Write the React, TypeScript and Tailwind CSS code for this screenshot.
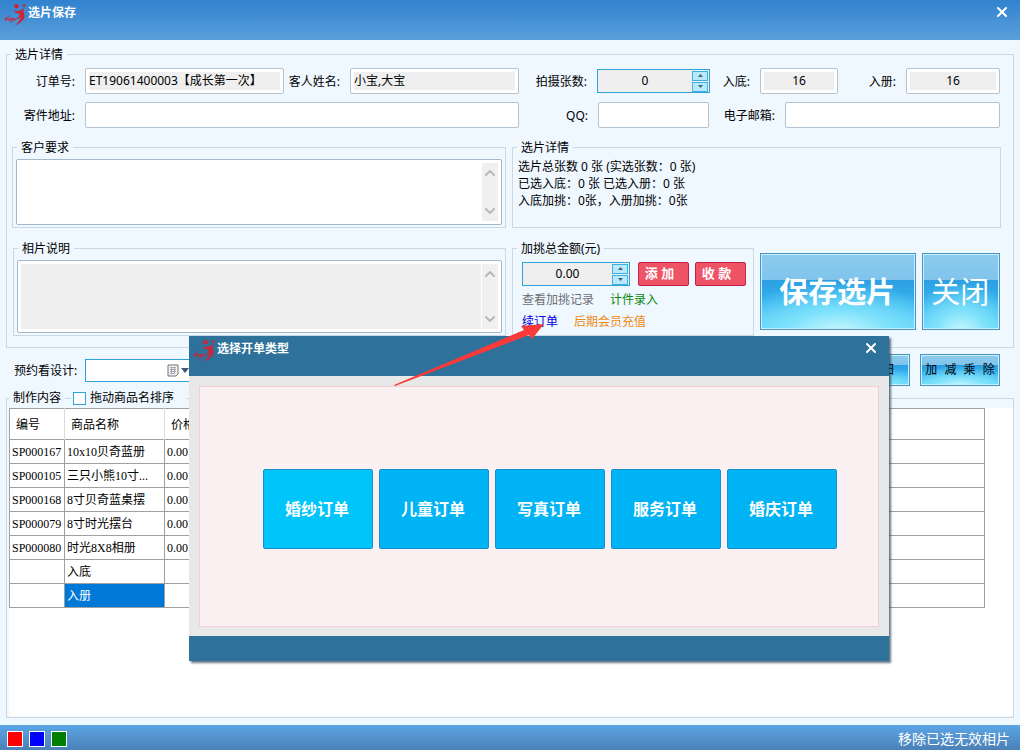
import React, { useState } from "react";
import { ChevronDown, ChevronUp, X } from "lucide-react";

type Product = {
  code: string;
  name: string;
  price: string;
};

const products: Product[] = [
  { code: "SP000167", name: "10x10贝奇蓝册", price: "0.00" },
  { code: "SP000105", name: "三只小熊10寸...", price: "0.00" },
  { code: "SP000168", name: "8寸贝奇蓝桌摆", price: "0.00" },
  { code: "SP000079", name: "8寸时光摆台", price: "0.00" },
  { code: "SP000080", name: "时光8X8相册", price: "0.00" },
  { code: "", name: "入底", price: "" },
  { code: "", name: "入册", price: "" },
];

const orderTypes = ["婚纱订单", "儿童订单", "写真订单", "服务订单", "婚庆订单"];

const Logo = () => (
  <svg width="22" height="24" viewBox="0 0 22 24" fill="none" stroke="#cf2434" aria-hidden="true">
    <circle cx="12.5" cy="3.2" r="2.2" fill="#cf2434" stroke="none" />
    <circle cx="20" cy="2.6" r="1.4" fill="#cf2434" stroke="none" />
    <path
      d="M10 7C13 9 17 8 20.500 4.500C19 7 19.500 9 20.500 12C21.500 16.500 16 20 10.500 23C14.500 19 17 16 16.500 13C16 15 14 16.500 11 16.500C14 15 16 13 15.500 10.500C14 11 11 10 10 7Z"
      fill="#cf2434"
      stroke="none"
    />
    <path d="M0 17.500L2.500 14.500L2 17.500L5 12.500M4 17.500L6 15L5.500 17.500L8 15M8.500 15L6.500 20M9 17.500L10 15L11.500 17L9.500 17.500" strokeWidth="1" />
  </svg>
);

type FieldProps = {
  id: string;
  label: string;
  value?: string;
  readOnly?: boolean;
  center?: boolean;
};

const Field = ({ id, label, value = "", readOnly, center }: FieldProps) => (
  <>
    <label htmlFor={id} className="whitespace-nowrap pr-2.5 pt-0.5 text-right">
      {label}
    </label>
    <div className="flex h-[26px] min-w-0 rounded-xs border border-[#b3c3cf] bg-white p-[3px]">
      <input
        id={id}
        defaultValue={value}
        readOnly={readOnly}
        className={`w-full min-w-0 outline-none ${readOnly ? "bg-[#efefef]" : "bg-white"} ${center ? "text-center" : ""}`}
      />
    </div>
  </>
);

type SpinnerProps = {
  id: string;
  value: string;
  labelledBy?: string;
};

const Spinner = ({ id, value, labelledBy }: SpinnerProps) => (
  <div className="flex h-6 min-w-0 flex-1 border border-[#2fa3d8] bg-[#efefef]">
    <input
      id={id}
      defaultValue={value}
      aria-labelledby={labelledBy}
      className="w-full min-w-0 bg-transparent text-center outline-none"
    />
    <div className="flex w-[17px] shrink-0 flex-col justify-center gap-px pr-px">
      {["增加", "减少"].map((name, i) => (
        <button
          key={name}
          aria-label={name}
          className="flex h-[10px] items-center justify-center border border-[#3bb0e3] bg-[#b9e8fb]"
        >
          <svg width="5" height="3" viewBox="0 0 5 3" fill="#41617c">
            <path d={i === 0 ? "M0 3L2.5 0L5 3Z" : "M0 0L2.5 3L5 0Z"} />
          </svg>
        </button>
      ))}
    </div>
  </div>
);

type MemoProps = {
  label: string;
  readOnly?: boolean;
};

const Memo = ({ label, readOnly }: MemoProps) => (
  <div className="flex h-full rounded-xs border border-[#a3b9cb] bg-white p-[3px]">
    <textarea
      aria-label={label}
      readOnly={readOnly}
      className={`block min-w-0 flex-1 resize-none outline-none ${readOnly ? "bg-[#efefef]" : "bg-white"}`}
    />
    <div className="flex w-[17px] shrink-0 flex-col items-center justify-between border-l border-white bg-[#f0f0f0] py-0.5 text-[#b8b8b8]">
      <ChevronUp size={16} strokeWidth={3} />
      <ChevronDown size={16} strokeWidth={3} />
    </div>
  </div>
);

const group = "min-w-0 border border-[#cbd8e4]";
const legend = "h-[18px] px-1 leading-5";
const redButton =
  "h-6 w-[51px] rounded-xs border border-[#c4204b] bg-[#ef5466] pr-2 text-[13px] font-bold text-white";
const glassButton =
  "border border-[#4a94c4] bg-[radial-gradient(75%_70%_at_50%_108%,#d6fbff_0%,#7fe2fb_45%,transparent_100%),linear-gradient(#8ccbed_0%,#80c4ec_34%,#2c9fe2_35%,#35b3ee_65%,#5cd2fa_100%)] shadow-[inset_0_0_0_1px_#c9effc]";

const OrderTypeDialog = ({ onClose }: { onClose: () => void }) => (
  <div
    role="dialog"
    aria-label="选择开单类型"
    className="absolute left-[189px] top-[336px] z-10 flex w-[700px] flex-col bg-[#e9e8e8] shadow-[2px_2px_2px_rgba(40,60,80,0.7)]"
  >
    <div className="flex h-10 items-start bg-[#2e719b] pl-1 pt-[3px] text-white">
      <Logo />
      <h2 className="ml-0.5 text-xs font-bold leading-5">选择开单类型</h2>
      <button aria-label="关闭窗口" onClick={onClose} className="ml-auto mr-2.5 mt-px">
        <X size={16} strokeWidth={3} />
      </button>
    </div>
    <div className="p-2.5 pb-[9px]">
      <div className="flex h-[241px] gap-1.5 border border-[#f3cfd4] bg-[#faeff1] pl-[63px] pt-[82px]">
        {orderTypes.map((type, i) => (
          <button
            key={type}
            className={`h-20 w-[110px] rounded-xs border border-[#158fd0] pr-0.5 text-base font-bold text-white ${
              i === 0 ? "bg-[#00c5fb]" : "bg-[#00b3f4]"
            }`}
          >
            {type}
          </button>
        ))}
      </div>
    </div>
    <div className="h-[25px] bg-[#2e719b]" />
  </div>
);

const App = () => {
  const [dialogOpen, setDialogOpen] = useState(true);

  return (
    <div className="relative flex min-h-screen flex-col bg-[#eff7ff] font-['Noto_Sans','Noto_Sans_CJK_SC',sans-serif] text-xs text-black">
      <header className="flex h-10 items-start bg-linear-to-b from-[#3182cf] to-[#5a9fdb] pl-1 pt-[3px] text-white">
        <Logo />
        <h1 className="ml-0.5 text-xs font-bold leading-5">选片保存</h1>
        <button aria-label="关闭程序" className="ml-auto mr-2.5 mt-px">
          <X size={16} strokeWidth={3} />
        </button>
      </header>

      <main className="flex flex-1 flex-col px-1.5 pb-[7px] pt-[5px]">
        <fieldset className={`${group} pb-[11px]`}>
          <legend className={`${legend} ml-1`}>选片详情</legend>

          <div className="grid grid-cols-[78px_199fr_66px_169fr_78px_113fr_50px_78fr_68px_94fr] items-center pr-[13px] pt-[5px]">
            <Field id="order-no" label="订单号:" value="ET19061400003【成长第一次】" readOnly />
            <Field id="guest" label="客人姓名:" value="小宝,大宝" readOnly />
            <label htmlFor="shots" className="pr-2.5 pt-0.5 text-right">
              拍摄张数:
            </label>
            <Spinner id="shots" value="0" />
            <Field id="base-count" label="入底:" value="16" readOnly center />
            <Field id="album-count" label="入册:" value="16" readOnly center />
          </div>

          <div className="mt-2 grid grid-cols-[78px_434fr_79px_111fr_76px_215fr] items-center pr-[13px]">
            <Field id="address" label="寄件地址:" />
            <Field id="qq" label="QQ:" />
            <Field id="email" label="电子邮箱:" />
          </div>

          <div className="mt-2.5 grid grid-cols-[494fr_489fr] gap-1.5 pl-[5px] pr-3">
            <fieldset className={`${group} h-[90px] px-[3px] pb-0.5 pt-[3px]`}>
              <legend className={`${legend} ml-px`}>客户要求</legend>
              <Memo label="客户要求" />
            </fieldset>
            <fieldset className={`${group} h-[90px] px-[5px] pt-0.5`}>
              <legend className={`${legend} -ml-px`}>选片详情</legend>
              <div className="leading-[17px]">
                <p>选片总张数 0 张 (实选张数：0 张)</p>
                <p>已选入底：0 张 已选入册：0 张</p>
                <p>入底加挑：0张，入册加挑：0张</p>
              </div>
            </fieldset>
          </div>

          <div className="mt-[11px] grid grid-cols-[493fr_242fr_240fr] gap-1.5 pl-1.5 pr-[13px]">
            <fieldset className={`${group} h-[97px] px-[3px] pb-0.5 pt-[3px]`}>
              <legend className={`${legend} ml-px`}>相片说明</legend>
              <Memo label="相片说明" readOnly />
            </fieldset>

            <fieldset className={`${group} h-[97px] pl-[9px] pr-[7px] pt-[5px]`}>
              <legend id="amount-legend" className={`${legend} -ml-[5px]`}>
                加挑总金额(元)
              </legend>
              <div className="flex gap-1.5">
                <Spinner id="amount" value="0.00" labelledBy="amount-legend" />
                <button className={`${redButton} ml-0.5`}>添 加</button>
                <button className={redButton}>收 款</button>
              </div>
              <div className="mt-[3px] flex gap-4 leading-[22px]">
                <a href="#records" className="text-[#6b6f73]">查看加挑记录</a>
                <a href="#piece" className="text-[#0a8a0a]">计件录入</a>
              </div>
              <div className="flex gap-4 leading-[22px]">
                <a href="#renew" onClick={() => setDialogOpen(true)} className="text-[#0000e0]">
                  续订单
                </a>
                <a href="#recharge" className="text-[#f08a10]">后期会员充值</a>
              </div>
            </fieldset>

            <div className="mt-3.5 flex h-[77px] gap-1.5 self-start">
              <button className={`${glassButton} flex-[157] whitespace-nowrap pr-0.5 pt-0.5 text-[29px] font-bold text-white`}>
                保存选片
              </button>
              <button className={`${glassButton} flex-[76] whitespace-nowrap pr-0.5 pt-0.5 text-[29px] text-white`}>关闭</button>
            </div>
          </div>
        </fieldset>

        <div className="mt-1.5 flex h-8 items-center pl-2 pr-2">
          <label htmlFor="design-date" className="w-[71px] pt-0.5">
            预约看设计:
          </label>
          <div className="flex h-[23px] w-[108px] items-center border border-[#2fa3d8] bg-white pr-[3px]">
            <input id="design-date" className="w-full min-w-0 outline-none" />
            <button aria-label="选择日期" className="flex items-center gap-0.5">
              <svg width="12" height="13" viewBox="0 0 12 13" fill="none">
                <path d="M1 1h10v9l-2 2H1z" fill="#f4f4f4" stroke="#7a6e6e" />
                <path d="M3 3.5h6M3 5.5h6M3 7.5h6M3 9.5h5M4.5 3v7M7.5 3v7" stroke="#a7a1b5" />
              </svg>
              <svg width="8" height="5" viewBox="0 0 8 5" fill="#44557a">
                <path d="M0 0h8L4 5z" />
              </svg>
            </button>
          </div>
          <button className={`${glassButton} ml-auto h-8 w-[90px] pr-3.5 text-right`}>日</button>
          <button
            className={`${glassButton} ml-2.5 mr-1.5 h-8 w-20 whitespace-nowrap pt-0.5 font-['Liberation_Mono','Noto_Sans_CJK_SC',monospace]`}
          >
            加 减 乘 除
          </button>
        </div>

        <fieldset className={`${group} mt-[3px] flex-1 pl-0.5`}>
          <legend className="flex h-[18px] items-center px-1 leading-[18px]">
            制作内容
            <span className="ml-1 h-px w-1.5 bg-[#cbd8e4]" />
            <label className="flex items-center gap-1 pl-0.5 pr-2">
              <input type="checkbox" className="size-[13px] appearance-none border border-[#2fa3d8] bg-white" />
              拖动商品名排序
            </label>
          </legend>
          <div className="mt-px min-h-[308px] bg-white pr-7">
            <table className="w-full table-fixed border-collapse border border-[#a0a0a0] bg-white font-['Liberation_Serif','Noto_Sans_CJK_SC',serif]">
              <thead>
                <tr className="h-[31px] text-left">
                  <th className="w-[55px] border-r border-[#dcdcdc] pl-1.5 pt-0.5 font-normal">编号</th>
                  <th className="w-[100px] border-r border-[#dcdcdc] pl-1.5 pt-0.5 font-normal">商品名称</th>
                  <th className="pl-1.5 pt-0.5 font-normal">价格</th>
                </tr>
              </thead>
              <tbody>
                {products.map((product, i) => (
                  <tr key={i} className="h-6 whitespace-nowrap">
                    <td className="border border-[#a0a0a0] pl-0.5">{product.code}</td>
                    <td
                      className={`border border-[#a0a0a0] pl-0.5 ${
                        i === products.length - 1 ? "bg-[#0078d7] text-white" : ""
                      }`}
                    >
                      {product.name}
                    </td>
                    <td className="border border-[#a0a0a0] pl-0.5">{product.price}</td>
                  </tr>
                ))}
              </tbody>
            </table>
          </div>
        </fieldset>
      </main>

      <footer className="flex h-[25px] items-center gap-1.5 bg-linear-to-b from-[#5ca6e6] to-[#4a80b6] pl-[7px] pr-2.5 pt-0.5">
        <span className="size-4 border border-white bg-[#ff0000]" />
        <span className="size-4 border border-white bg-[#0000ff]" />
        <span className="size-4 border border-white bg-[#008000]" />
        <a href="#remove-invalid" className="ml-auto text-sm text-white">
          移除已选无效相片
        </a>
      </footer>

      {dialogOpen && <OrderTypeDialog onClose={() => setDialogOpen(false)} />}

      {/* pointer from the dialog to the renew link */}
      <svg
        className="pointer-events-none absolute left-[394px] top-[322px] z-20"
        width="152"
        height="66"
        viewBox="0 0 152 66"
        fill="#f93a38"
      >
        <path d="M0 63L130 8L127 4L150 2L138 17L135 13L1 64Z" />
      </svg>
    </div>
  );
};

export default App;
